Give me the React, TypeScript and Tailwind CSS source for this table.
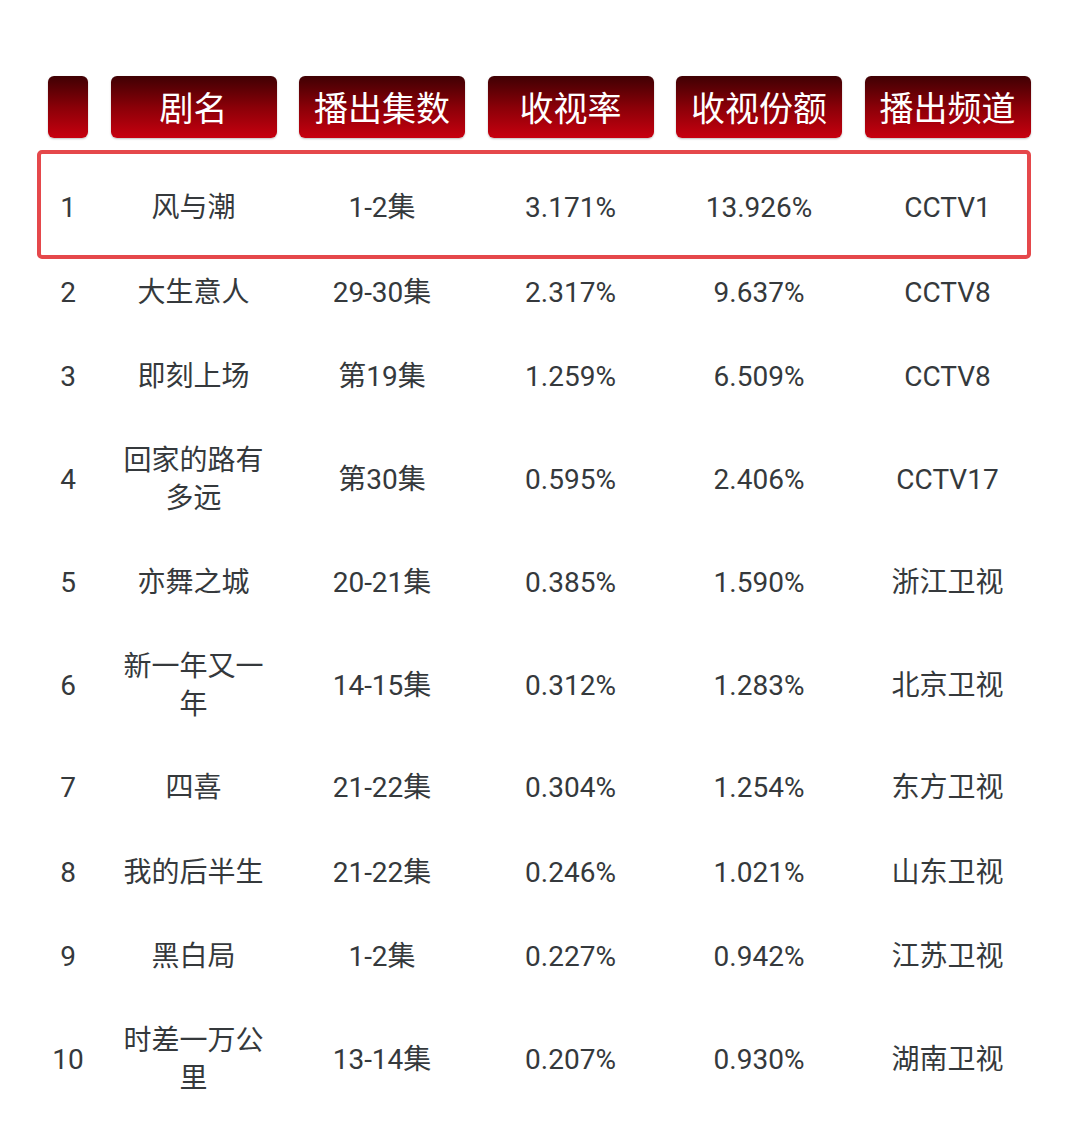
const headers = ["剧名", "播出集数", "收视率", "收视份额", "播出频道"];

const rows = [
  ["1", "风与潮", "1-2集", "3.171%", "13.926%", "CCTV1"],
  ["2", "大生意人", "29-30集", "2.317%", "9.637%", "CCTV8"],
  ["3", "即刻上场", "第19集", "1.259%", "6.509%", "CCTV8"],
  ["4", "回家的路有多远", "第30集", "0.595%", "2.406%", "CCTV17"],
  ["5", "亦舞之城", "20-21集", "0.385%", "1.590%", "浙江卫视"],
  ["6", "新一年又一年", "14-15集", "0.312%", "1.283%", "北京卫视"],
  ["7", "四喜", "21-22集", "0.304%", "1.254%", "东方卫视"],
  ["8", "我的后半生", "21-22集", "0.246%", "1.021%", "山东卫视"],
  ["9", "黑白局", "1-2集", "0.227%", "0.942%", "江苏卫视"],
  ["10", "时差一万公里", "13-14集", "0.207%", "0.930%", "湖南卫视"],
];

const grid = "grid w-max grid-cols-[40px_repeat(5,166px)] gap-x-[22.5px]";
const headCell =
  "h-[62px] rounded-[6px] bg-gradient-to-b from-[#400003] via-[#8a0008] to-[#c8000f] shadow-[0_1px_2px_rgba(0,0,0,0.25)] flex items-center justify-center pt-[4px] text-white text-[34px]";

export default function App() {
  return (
    <div
      className="min-h-[1128px] w-[1080px] bg-white pl-[48px] pt-[76px] text-[#35393c]"
      style={{ fontFamily: "Roboto, 'Noto Sans CJK SC', sans-serif" }}
    >
      <div className={grid}>
        <div className={headCell} />
        {headers.map((h) => (
          <div key={h} className={headCell}>
            {h}
          </div>
        ))}
      </div>

      <div className="mt-[28px]">
        {rows.map((r, i) => (
          <div key={r[0]} className={`${grid} relative min-h-[84.5px] items-center text-[28px]`}>
            {i === 0 && (
              <span className="pointer-events-none absolute -left-[11px] -top-[16px] -bottom-[8px] right-0 rounded-[5px] border-[4px] border-[#e5484b]" />
            )}
            <div className="text-center leading-[36px]">{r[0]}</div>
            <div className="px-[10px] py-[22.5px] text-center leading-[38px]">{r[1]}</div>
            <div className="text-center leading-[36px]">{r[2]}</div>
            <div className="text-center leading-[36px]">{r[3]}</div>
            <div className="text-center leading-[36px]">{r[4]}</div>
            <div className="text-center leading-[36px]">{r[5]}</div>
          </div>
        ))}
      </div>
    </div>
  );
}
